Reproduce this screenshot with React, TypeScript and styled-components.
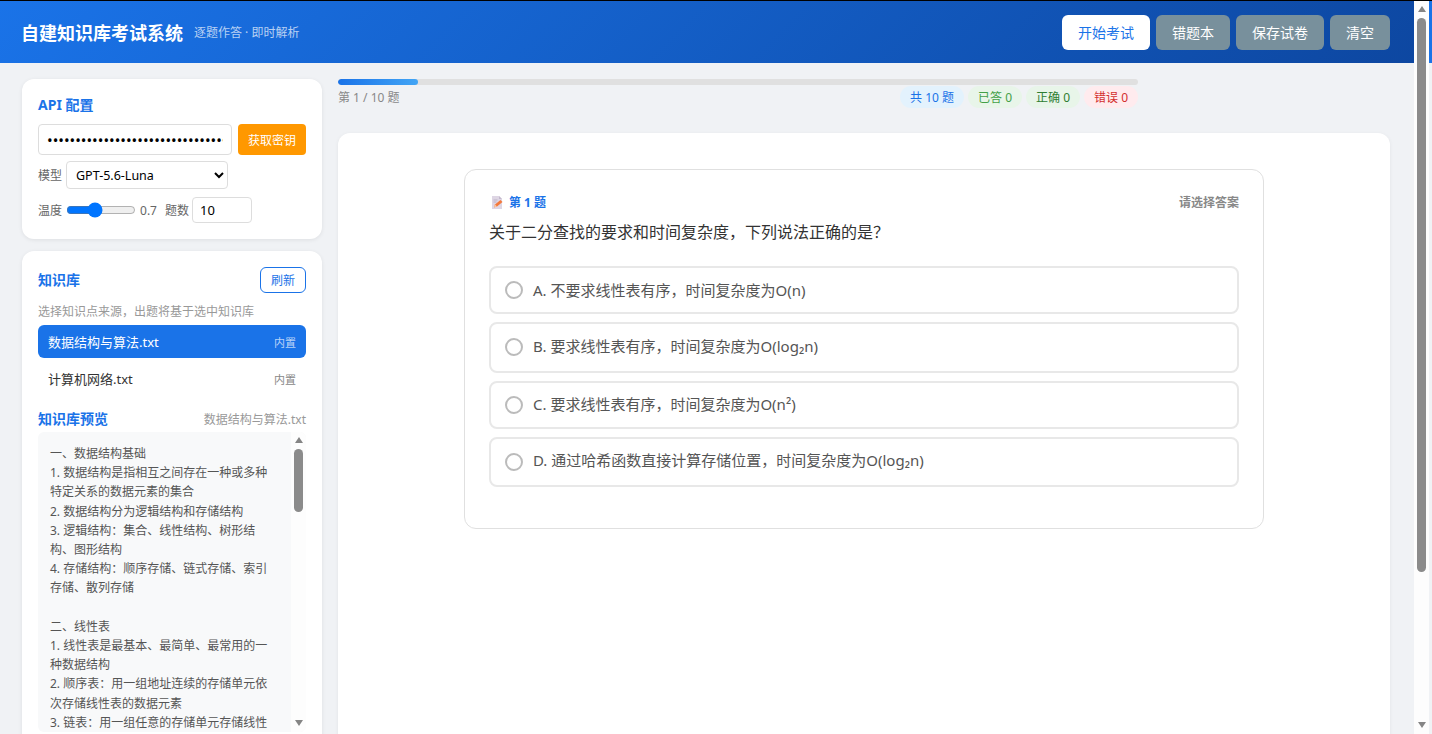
import React from "react";
import styled, { createGlobalStyle } from "styled-components";

const PREVIEW_TEXT = `一、数据结构基础
1. 数据结构是指相互之间存在一种或多种特定关系的数据元素的集合
2. 数据结构分为逻辑结构和存储结构
3. 逻辑结构：集合、线性结构、树形结构、图形结构
4. 存储结构：顺序存储、链式存储、索引存储、散列存储

二、线性表
1. 线性表是最基本、最简单、最常用的一种数据结构
2. 顺序表：用一组地址连续的存储单元依次存储线性表的数据元素
3. 链表：用一组任意的存储单元存储线性`;

const OPTIONS = [
  { text: "A. 不要求线性表有序，时间复杂度为O(n)", tall: false },
  { text: "B. 要求线性表有序，时间复杂度为O(log₂n)", tall: true },
  { text: "C. 要求线性表有序，时间复杂度为O(n²)", tall: false },
  { text: "D. 通过哈希函数直接计算存储位置，时间复杂度为O(log₂n)", tall: true },
];

const GlobalStyle = createGlobalStyle`
  * { box-sizing: border-box; }
  html, body {
    margin: 0;
    height: 100%;
    overflow: hidden;
  }
  body {
    font-family: "Noto Sans", "Noto Sans CJK SC", sans-serif;
    color: #333;
    background: #f0f2f5;
  }
`;

const Shell = styled.div`
  display: flex;
  height: 100vh;
  border-top: 1px solid #000;
`;

const Page = styled.div`
  flex: 1;
  min-width: 0;
  overflow: hidden;
`;

const Edge = styled.div`
  width: 3px;
  background: linear-gradient(#1a73e8 0, #1a73e8 62px, #f0f2f5 62px);
`;

/* the browser's scrollbars don't show in the photo, so they are drawn */
const Rail = styled.div`
  width: 15px;
  flex: none;
  display: flex;
  flex-direction: column;
  align-items: center;
  background: #fdfdfd;
`;

const RailThumb = styled.div<{ $height: number }>`
  width: 9px;
  height: ${(p) => p.$height}px;
  flex: none;
  border-radius: 5px;
  background: #8b8b8b;
`;

const RailSpacer = styled.div`
  flex: 1;
`;

const RailArrow = styled.div<{ $down?: boolean }>`
  width: 15px;
  height: 17px;
  flex: none;
  display: flex;
  justify-content: center;
  align-items: ${(p) => (p.$down ? "flex-start" : "flex-end")};
  padding: ${(p) => (p.$down ? "5px 0 0" : "0 0 6px")};

  &::before {
    content: "";
    border-left: 4.5px solid transparent;
    border-right: 4.5px solid transparent;
    border-bottom: ${(p) => (p.$down ? "0" : "6px solid #858585")};
    border-top: ${(p) => (p.$down ? "6px solid #858585" : "0")};
  }
`;

const Header = styled.header`
  height: 62px;
  padding: 0 24px 0 21px;
  display: flex;
  align-items: center;
  justify-content: space-between;
  background: linear-gradient(135deg, #1a73e8, #0d47a1);
`;

const Brand = styled.div`
  display: flex;
  align-items: center;
  gap: 11px;
`;

const Title = styled.h1`
  margin: 0;
  font-size: 18px;
  font-weight: 700;
  color: #fff;
`;

const Subtitle = styled.span`
  font-size: 12px;
  color: rgba(255, 255, 255, 0.7);
`;

const Toolbar = styled.div`
  display: flex;
  gap: 6px;
`;

const ToolButton = styled.button<{ $primary?: boolean }>`
  height: 35px;
  padding: 0 16px;
  border: none;
  border-radius: 6px;
  font: inherit;
  font-size: 14px;
  color: ${(p) => (p.$primary ? "#1a73e8" : "#fff")};
  background: ${(p) => (p.$primary ? "#fff" : "#78909c")};
`;

const Layout = styled.div`
  display: flex;
  align-items: flex-start;
  gap: 16px;
  padding: 16px 24px 16px 22px;
`;

const Sidebar = styled.aside`
  width: 300px;
  flex: none;
  display: flex;
  flex-direction: column;
  gap: 12px;
`;

const Card = styled.section`
  padding: 16px;
  background: #fff;
  border-radius: 12px;
  box-shadow: 0 1px 4px rgba(0, 0, 0, 0.08);
`;

const CardTitle = styled.h2`
  margin: 0;
  font-size: 14px;
  line-height: 20px;
  font-weight: 700;
  color: #1a73e8;
`;

const KeyRow = styled.div`
  display: flex;
  gap: 6px;
  margin-top: 9px;
`;

const TextInput = styled.input`
  height: 31px;
  min-width: 0;
  flex: 1;
  padding: 0 8px;
  border: 1px solid #ddd;
  border-radius: 4px;
  font: inherit;
  font-size: 15px;
  color: #000;
  outline: none;
`;

const KeyButton = styled.button`
  width: 68px;
  height: 31px;
  flex: none;
  padding: 0;
  border: none;
  border-radius: 4px;
  font: inherit;
  font-size: 12px;
  color: #fff;
  background: #ff9800;
`;

const FieldRow = styled.div<{ $top: number }>`
  display: flex;
  align-items: center;
  margin-top: ${(p) => p.$top}px;
`;

const FieldLabel = styled.label`
  font-size: 12px;
  color: #666;
  white-space: nowrap;
`;

const ModelSelect = styled.select`
  width: 162px;
  height: 28px;
  margin-left: 4px;
  padding: 0 5px;
  border: 1px solid #ddd;
  border-radius: 4px;
  font: inherit;
  font-size: 12.5px;
  color: #000;
  background-color: #fff;
`;

const Range = styled.input`
  width: 70px;
  margin: 0 4px;
  flex: none;
`;

const RangeValue = styled.span`
  font-size: 12px;
  color: #666;
  margin-right: 8px;
`;

const CountInput = styled.input`
  width: 60px;
  height: 26px;
  margin-left: 3px;
  padding: 0 7px;
  border: 1px solid #ddd;
  border-radius: 4px;
  font: inherit;
  font-size: 13px;
  color: #000;
  outline: none;
`;

const SpacedRow = styled.div<{ $top?: number }>`
  display: flex;
  align-items: center;
  justify-content: space-between;
  margin-top: ${(p) => p.$top ?? 0}px;
`;

const RefreshButton = styled.button`
  width: 46px;
  height: 26px;
  padding: 0;
  border: 1px solid #1a73e8;
  border-radius: 6px;
  font: inherit;
  font-size: 12px;
  color: #1a73e8;
  background: #fff;
`;

const Hint = styled.p`
  margin: 10px 0 4px;
  font-size: 12px;
  line-height: 18px;
  color: #999;
`;

const KbList = styled.ul`
  display: flex;
  flex-direction: column;
  gap: 4px;
  margin: 0;
  padding: 0;
  list-style: none;
`;

const KbItem = styled.li<{ $active?: boolean }>`
  height: 33px;
  padding: 0 10px;
  display: flex;
  align-items: center;
  justify-content: space-between;
  border-radius: 6px;
  font-size: 13px;
  color: ${(p) => (p.$active ? "#fff" : "#333")};
  background: ${(p) => (p.$active ? "#1a73e8" : "transparent")};
`;

const KbTag = styled.span<{ $active?: boolean }>`
  font-size: 11px;
  color: ${(p) => (p.$active ? "rgba(255,255,255,0.7)" : "#888")};
`;

const PreviewName = styled.span`
  font-size: 12px;
  color: #999;
`;

const PreviewFrame = styled.div`
  height: 300px;
  margin-top: 3px;
  display: flex;
  overflow: hidden;
  border-radius: 6px;
  background: #f8f9fa;
`;

const PreviewText = styled.div`
  flex: 1;
  min-width: 0;
  padding: 12px;
  font-size: 12px;
  line-height: 19.2px;
  color: #555;
  white-space: pre-wrap;
`;

const Main = styled.main`
  flex: 1;
  min-width: 0;
`;

const Progress = styled.div`
  width: 800px;
  margin-bottom: 25px;
`;

const Track = styled.div`
  height: 6px;
  border-radius: 3px;
  background: #e0e0e0;
  overflow: hidden;
`;

const Fill = styled.div`
  height: 100%;
  border-radius: 3px;
  background: linear-gradient(90deg, #1a73e8, #42a5f5);
`;

const ProgressInfo = styled.div`
  display: flex;
  align-items: center;
  justify-content: space-between;
  margin-top: 1px;
`;

const ProgressLabel = styled.span`
  font-size: 12px;
  color: #888;
`;

const Chips = styled.div`
  display: flex;
  gap: 4px;
`;

const chipColors = {
  total: ["#e3f2fd", "#1a73e8"],
  answered: ["#e8f5e9", "#43a047"],
  correct: ["#e8f5e9", "#2e7d32"],
  wrong: ["#ffebee", "#d32f2f"],
};

const Chip = styled.span<{ $kind: keyof typeof chipColors }>`
  height: 22px;
  padding: 0 10px;
  border-radius: 11px;
  font-size: 12px;
  line-height: 23px;
  color: ${(p) => chipColors[p.$kind][1]};
  background: ${(p) => chipColors[p.$kind][0]};
`;

const ExamCard = styled.section`
  height: 781px;
  padding-top: 36px;
  display: flex;
  justify-content: center;
  align-items: flex-start;
  background: #fff;
  border-radius: 12px;
  box-shadow: 0 1px 4px rgba(0, 0, 0, 0.06);
`;

const Question = styled.article`
  width: 800px;
  padding: 24px;
  border: 1px solid #e0e0e0;
  border-radius: 12px;
`;

const QuestionHead = styled.div`
  display: flex;
  align-items: center;
  justify-content: space-between;
  height: 16px;
  font-size: 12px;
  font-weight: 700;
`;

const QuestionNo = styled.span`
  display: flex;
  align-items: center;
  gap: 5px;
  padding-left: 2px;
  color: #1a73e8;
`;

const QuestionState = styled.span`
  color: #888;
`;

const QuestionText = styled.p`
  margin: 10px 0 22px;
  font-size: 16px;
  line-height: 24px;
  color: #333;
`;

const OptionList = styled.div`
  display: flex;
  flex-direction: column;
  gap: 8px;
  margin-bottom: 17px;
`;

const Option = styled.div<{ $tall?: boolean }>`
  height: ${(p) => (p.$tall ? 50.5 : 48)}px;
  padding: 0 14px;
  display: flex;
  align-items: center;
  gap: 10px;
  border: 2px solid #e8e8e8;
  border-radius: 8px;
  font-size: 15px;
  color: #555;
`;

const OptionText = styled.span<{ $tall?: boolean }>`
  margin-bottom: ${(p) => (p.$tall ? 4 : 2)}px;
`;

const Radio = styled.span`
  width: 18px;
  height: 18px;
  flex: none;
  border: 2px solid #bbb;
  border-radius: 50%;
`;

const MemoIcon = () => (
  <svg width="13" height="13" viewBox="0 0 13 13" aria-hidden="true">
    <path d="M1 0h7l3 3v10H1z" fill="#ded6e4" />
    <path d="M8 0l3 3H8z" fill="#c3b8cc" />
    <path d="M2.5 4h4M2.5 6h3" stroke="#b5a9c0" strokeWidth="0.8" />
    <path d="M3 11.5l1-3 5.5-4.5 2 2L6 10.5z" fill="#f4793b" />
    <path d="M3 11.5l1-3 2 2z" fill="#f9c9a5" />
  </svg>
);

const ScrollRail = ({ thumb }: { thumb: number }) => (
  <Rail>
    <RailArrow />
    <RailThumb $height={thumb} />
    <RailSpacer />
    <RailArrow $down />
  </Rail>
);

const App = () => {
  return (
    <>
      <GlobalStyle />
      <Shell>
        <Page>
          <Header>
            <Brand>
              <Title>自建知识库考试系统</Title>
              <Subtitle>逐题作答 · 即时解析</Subtitle>
            </Brand>
            <Toolbar>
              <ToolButton $primary>开始考试</ToolButton>
              <ToolButton>错题本</ToolButton>
              <ToolButton>保存试卷</ToolButton>
              <ToolButton>清空</ToolButton>
            </Toolbar>
          </Header>

          <Layout>
            <Sidebar>
              <Card>
                <CardTitle>API 配置</CardTitle>
                <KeyRow>
                  <TextInput type="password" readOnly value="sk-0123456789abcdefghijklmnopqrstuvwxyz0123" />
                  <KeyButton>获取密钥</KeyButton>
                </KeyRow>
                <FieldRow $top={6}>
                  <FieldLabel>模型</FieldLabel>
                  <ModelSelect defaultValue="GPT-5.6-Luna">
                    <option>GPT-5.6-Luna</option>
                  </ModelSelect>
                </FieldRow>
                <FieldRow $top={8}>
                  <FieldLabel>温度</FieldLabel>
                  <Range type="range" min={0} max={1.8} step={0.1} defaultValue={0.7} />
                  <RangeValue>0.7</RangeValue>
                  <FieldLabel>题数</FieldLabel>
                  <CountInput type="number" readOnly value={10} />
                </FieldRow>
              </Card>

              <Card>
                <SpacedRow>
                  <CardTitle>知识库</CardTitle>
                  <RefreshButton>刷新</RefreshButton>
                </SpacedRow>
                <Hint>选择知识点来源，出题将基于选中知识库</Hint>
                <KbList>
                  <KbItem $active>
                    数据结构与算法.txt
                    <KbTag $active>内置</KbTag>
                  </KbItem>
                  <KbItem>
                    计算机网络.txt
                    <KbTag>内置</KbTag>
                  </KbItem>
                </KbList>
                <SpacedRow $top={14}>
                  <CardTitle>知识库预览</CardTitle>
                  <PreviewName>数据结构与算法.txt</PreviewName>
                </SpacedRow>
                <PreviewFrame>
                  <PreviewText>{PREVIEW_TEXT}</PreviewText>
                  <ScrollRail thumb={63} />
                </PreviewFrame>
              </Card>
            </Sidebar>

            <Main>
              <Progress>
                <Track>
                  <Fill style={{ width: `${(1 / 10) * 100}%` }} />
                </Track>
                <ProgressInfo>
                  <ProgressLabel>第 1 / 10 题</ProgressLabel>
                  <Chips>
                    <Chip $kind="total">共 10 题</Chip>
                    <Chip $kind="answered">已答 0</Chip>
                    <Chip $kind="correct">正确 0</Chip>
                    <Chip $kind="wrong">错误 0</Chip>
                  </Chips>
                </ProgressInfo>
              </Progress>

              <ExamCard>
                <Question>
                  <QuestionHead>
                    <QuestionNo>
                      <MemoIcon />
                      第 1 题
                    </QuestionNo>
                    <QuestionState>请选择答案</QuestionState>
                  </QuestionHead>
                  <QuestionText>关于二分查找的要求和时间复杂度，下列说法正确的是？</QuestionText>
                  <OptionList>
                    {OPTIONS.map((o) => (
                      <Option key={o.text} $tall={o.tall}>
                        <Radio />
                        <OptionText $tall={o.tall}>{o.text}</OptionText>
                      </Option>
                    ))}
                  </OptionList>
                </Question>
              </ExamCard>
            </Main>
          </Layout>
        </Page>
        <ScrollRail thumb={554} />
        <Edge />
      </Shell>
    </>
  );
};

export default App;
